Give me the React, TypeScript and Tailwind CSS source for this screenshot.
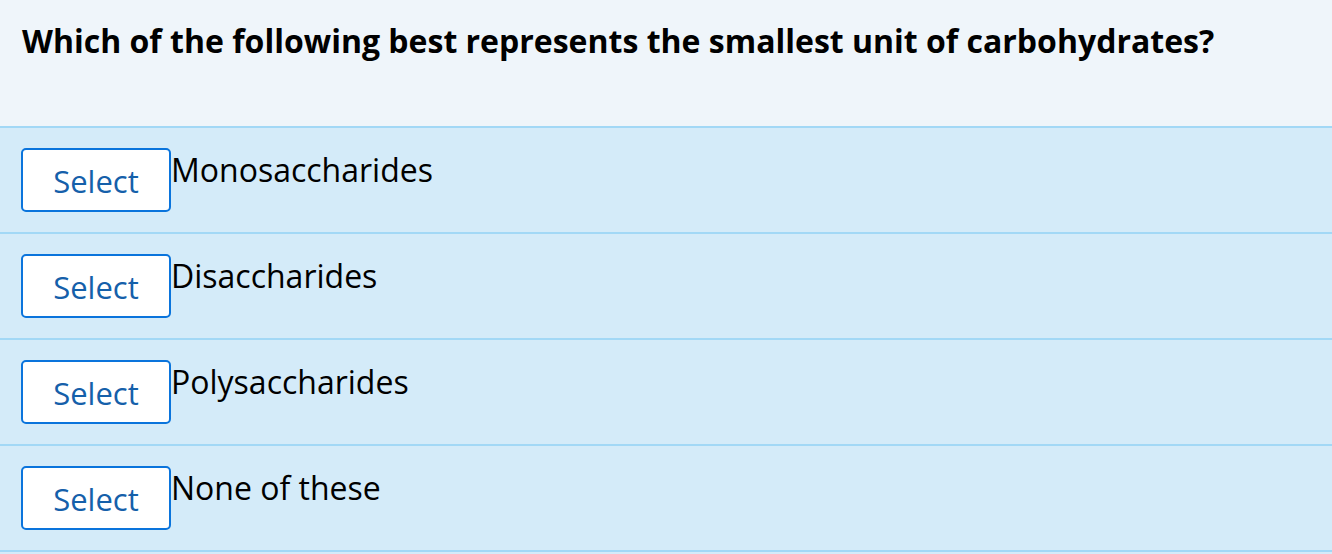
const OPTIONS = ["Monosaccharides", "Disaccharides", "Polysaccharides", "None of these"];

export default function App() {
  return (
    <div className="min-h-screen bg-[#d4ebf9] font-['Open_Sans',sans-serif] text-black">
      <div className="h-[126px] bg-[#eff5fa] px-[22px] pt-[19px]">
        <h1 className="text-[32px] font-bold leading-[44px]">
          Which of the following best represents the smallest unit of carbohydrates?
        </h1>
      </div>
      <ul>
        {OPTIONS.map((opt) => (
          <li
            key={opt}
            className="flex items-start border-t-2 border-[#a2d8f6] bg-[#d4ebf9] pl-[21px] pr-[22px] py-[20px]"
          >
            <button
              type="button"
              className="h-[64px] w-[150px] shrink-0 rounded-[5px] border-2 border-[#0a74dc] bg-white pt-[3px] text-[31px] text-[#1560aa]"
            >
              Select
            </button>
            <span className="text-[32px] leading-[44px]">{opt}</span>
          </li>
        ))}
      </ul>
      <div className="border-t-2 border-[#a2d8f6]" />
    </div>
  );
}
